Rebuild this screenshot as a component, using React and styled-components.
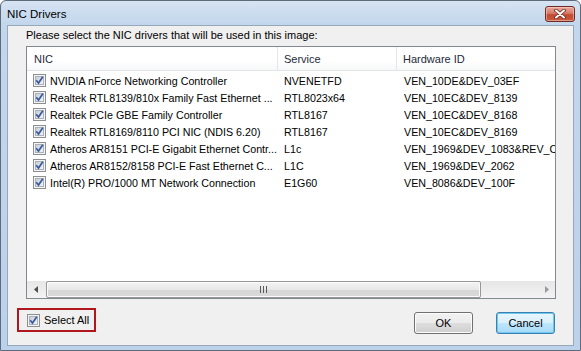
import React from "react";
import styled, { createGlobalStyle } from "styled-components";

const Global = createGlobalStyle`
  html, body { margin: 0; padding: 0; background: #fff; overflow: hidden; }
  * { box-sizing: border-box; }
`;

const Window = styled.div`
  width: 581px;
  height: 351px;
  display: flex;
  flex-direction: column;
  background: linear-gradient(180deg, #d6e3f2 0px, #c2d6ec 24px, #bcd1ea 100%);
  border: 1px solid #5d6b7a;
  border-radius: 6px 6px 0 0;
  font-family: "Liberation Sans", Arial, sans-serif;
  font-size: 10.7px;
  color: #000;
`;

const TitleBar = styled.div`
  height: 24px;
  flex: none;
  display: flex;
  align-items: center;
  justify-content: space-between;
  padding: 0 5px 0 6px;
`;

const Title = styled.div`
  font-size: 11.5px;
  color: #000;
  margin-top: 1px;
`;

const CloseButton = styled.div`
  width: 30px;
  height: 16px;
  margin-top: 2px;
  border: 1px solid #6d2b22;
  border-radius: 3px;
  background: linear-gradient(180deg, #e8a99c 0%, #d77a68 45%, #c24b33 55%, #c9573d 100%);
  display: flex;
  align-items: center;
  justify-content: center;
  box-shadow: inset 0 0 0 1px rgba(255, 220, 210, 0.5);
`;

const Client = styled.div`
  flex: 1;
  margin: 0 6px 4px 6px;
  background: #f0f0f0;
  border: 1px solid #98a8bb;
  display: flex;
  flex-direction: column;
`;

const Prompt = styled.div`
  padding: 2px 0 0 18px;
  height: 20px;
  line-height: 14px;
  font-size: 11px;
`;

const ListBox = styled.div`
  margin: 0 0 0 18px;
  width: 530px;
  height: 253px;
  border: 1px solid #828790;
  background: #fff;
  display: flex;
  flex-direction: column;
  overflow: hidden;
`;

const Viewport = styled.div`
  flex: 1;
  overflow: hidden;
`;

const HeaderRow = styled.div`
  display: flex;
  height: 24px;
  background: linear-gradient(180deg, #ffffff 0%, #ffffff 60%, #f7f8f9 100%);
  border-bottom: 1px solid #e5e5e5;
  width: 700px;
`;

const HeaderCell = styled.div`
  flex: none;
  width: ${(p) => p.$w}px;
  padding-left: ${(p) => p.$pad}px;
  border-right: 1px solid #e3e6ea;
  display: flex;
  align-items: center;
  color: #1e2a3a;
  white-space: nowrap;
  font-size: 11px;
`;

const Rows = styled.div`
  padding-top: 1px;
  width: 700px;
`;

const Row = styled.div`
  display: flex;
  height: 17px;
  align-items: center;
`;

const Cell = styled.div`
  flex: none;
  width: ${(p) => p.$w}px;
  padding-left: ${(p) => p.$pad}px;
  display: flex;
  align-items: center;
  gap: 4px;
  white-space: nowrap;
  overflow: hidden;
`;

const HScroll = styled.div`
  height: 17px;
  flex: none;
  display: flex;
  background: linear-gradient(180deg, #e6e6e6 0%, #f3f3f3 100%);
`;

const ArrowButton = styled.div`
  width: 17px;
  height: 17px;
  flex: none;
  display: flex;
  align-items: center;
  justify-content: center;
`;

const Track = styled.div`
  flex: 1;
  display: flex;
  padding: 0 57px 0 2px;
`;

const Thumb = styled.div`
  flex: 1;
  height: 17px;
  border: 1px solid #979797;
  border-radius: 2px;
  background: linear-gradient(180deg, #f3f3f3 0%, #e8e8e8 50%, #d6d6d6 51%, #dadada 100%);
  box-shadow: inset 0 0 0 1px #fbfbfb;
  display: flex;
  align-items: center;
  justify-content: center;
`;

const Footer = styled.div`
  display: flex;
  align-items: flex-start;
  padding: 9px 18px 0 9px;
  font-size: 11px;
`;

const SelectAllBox = styled.label`
  width: 79px;
  height: 24px;
  border: 2px solid #b0171d;
  display: flex;
  align-items: center;
  gap: 4px;
  padding-left: 8px;
`;

const Spacer = styled.div`
  flex: 1;
`;

const Button = styled.div`
  width: 59px;
  height: 22px;
  margin-top: 4px;
  margin-left: ${(p) => (p.$first ? 0 : 23)}px;
  border: 1px solid ${(p) => (p.$default ? "#3c7fb1" : "#707070")};
  border-radius: 3px;
  background: ${(p) =>
    p.$default
      ? "linear-gradient(180deg, #eaf6fd 0%, #d9f0fc 50%, #bee6fd 51%, #a7d9f5 100%)"
      : "linear-gradient(180deg, #f2f2f2 0%, #ebebeb 50%, #dddddd 51%, #cfcfcf 100%)"};
  box-shadow: inset 0 0 0 1px ${(p) => (p.$default ? "#6fc8f0" : "#fcfcfc")};
  display: flex;
  align-items: center;
  justify-content: center;
`;

const CheckBox = () => (
  <svg width="13" height="13" viewBox="0 0 13 13" style={{ flex: "none" }}>
    <defs>
      <linearGradient id="cbg" x1="0" y1="0" x2="1" y2="1">
        <stop offset="0" stopColor="#c6ccd6" />
        <stop offset="1" stopColor="#f3f4f7" />
      </linearGradient>
    </defs>
    <rect x="0.5" y="0.5" width="12" height="12" fill="#f4f4f4" stroke="#8e8f8f" />
    <rect x="2.5" y="2.5" width="8" height="8" fill="url(#cbg)" stroke="#aab1bb" />
    <path d="M3.2 6.3 L5.5 9 L9.8 2.8" fill="none" stroke="#3a5a9c" strokeWidth="1.7" />
  </svg>
);

const rows = [
  ["NVIDIA nForce Networking Controller", "NVENETFD", "VEN_10DE&DEV_03EF"],
  ["Realtek RTL8139/810x Family Fast Ethernet ...", "RTL8023x64", "VEN_10EC&DEV_8139"],
  ["Realtek PCIe GBE Family Controller", "RTL8167", "VEN_10EC&DEV_8168"],
  ["Realtek RTL8169/8110 PCI NIC (NDIS 6.20)", "RTL8167", "VEN_10EC&DEV_8169"],
  ["Atheros AR8151 PCI-E Gigabit Ethernet Contr...", "L1c", "VEN_1969&DEV_1083&REV_C0"],
  ["Atheros AR8152/8158 PCI-E Fast Ethernet C...", "L1C", "VEN_1969&DEV_2062"],
  ["Intel(R) PRO/1000 MT Network Connection", "E1G60", "VEN_8086&DEV_100F"],
];

export default function App() {
  return (
    <>
      <Global />
      <Window>
        <TitleBar>
          <Title>NIC Drivers</Title>
          <CloseButton>
            <svg width="14" height="10" viewBox="0 0 14 10">
              <path d="M3 1.5 L11 8.5 M11 1.5 L3 8.5" stroke="#6a2418" strokeWidth="3.6" strokeLinecap="round" />
              <path d="M3 1.5 L11 8.5 M11 1.5 L3 8.5" stroke="#ffffff" strokeWidth="2" strokeLinecap="round" />
            </svg>
          </CloseButton>
        </TitleBar>
        <Client>
          <Prompt>Please select the NIC drivers that will be used in this image:</Prompt>
          <ListBox>
            <Viewport>
              <HeaderRow>
                <HeaderCell $w={251} $pad={7}>NIC</HeaderCell>
                <HeaderCell $w={119} $pad={6}>Service</HeaderCell>
                <HeaderCell $w={200} $pad={6}>Hardware ID</HeaderCell>
              </HeaderRow>
              <Rows>
                {rows.map((r, i) => (
                  <Row key={i}>
                    <Cell $w={251} $pad={6}>
                      <CheckBox />
                      <span>{r[0]}</span>
                    </Cell>
                    <Cell $w={119} $pad={6}>{r[1]}</Cell>
                    <Cell $w={200} $pad={7}>{r[2]}</Cell>
                  </Row>
                ))}
              </Rows>
            </Viewport>
            <HScroll>
              <ArrowButton>
                <svg width="4" height="7" viewBox="0 0 4 7">
                  <path d="M4 0 L0 3.5 L4 7 Z" fill="#4d4d4d" />
                </svg>
              </ArrowButton>
              <Track>
                <Thumb>
                  <svg width="7" height="7" viewBox="0 0 7 7">
                    <path d="M0.5 0 V7 M3.5 0 V7 M6.5 0 V7" stroke="#5a5a5a" strokeWidth="1" />
                  </svg>
                </Thumb>
              </Track>
              <ArrowButton>
                <svg width="4" height="7" viewBox="0 0 4 7">
                  <path d="M0 0 L4 3.5 L0 7 Z" fill="#9a9a9a" />
                </svg>
              </ArrowButton>
            </HScroll>
          </ListBox>
          <Footer>
            <SelectAllBox>
              <CheckBox />
              <span>Select All</span>
            </SelectAllBox>
            <Spacer />
            <Button $first>OK</Button>
            <Button $default>Cancel</Button>
          </Footer>
        </Client>
      </Window>
    </>
  );
}
